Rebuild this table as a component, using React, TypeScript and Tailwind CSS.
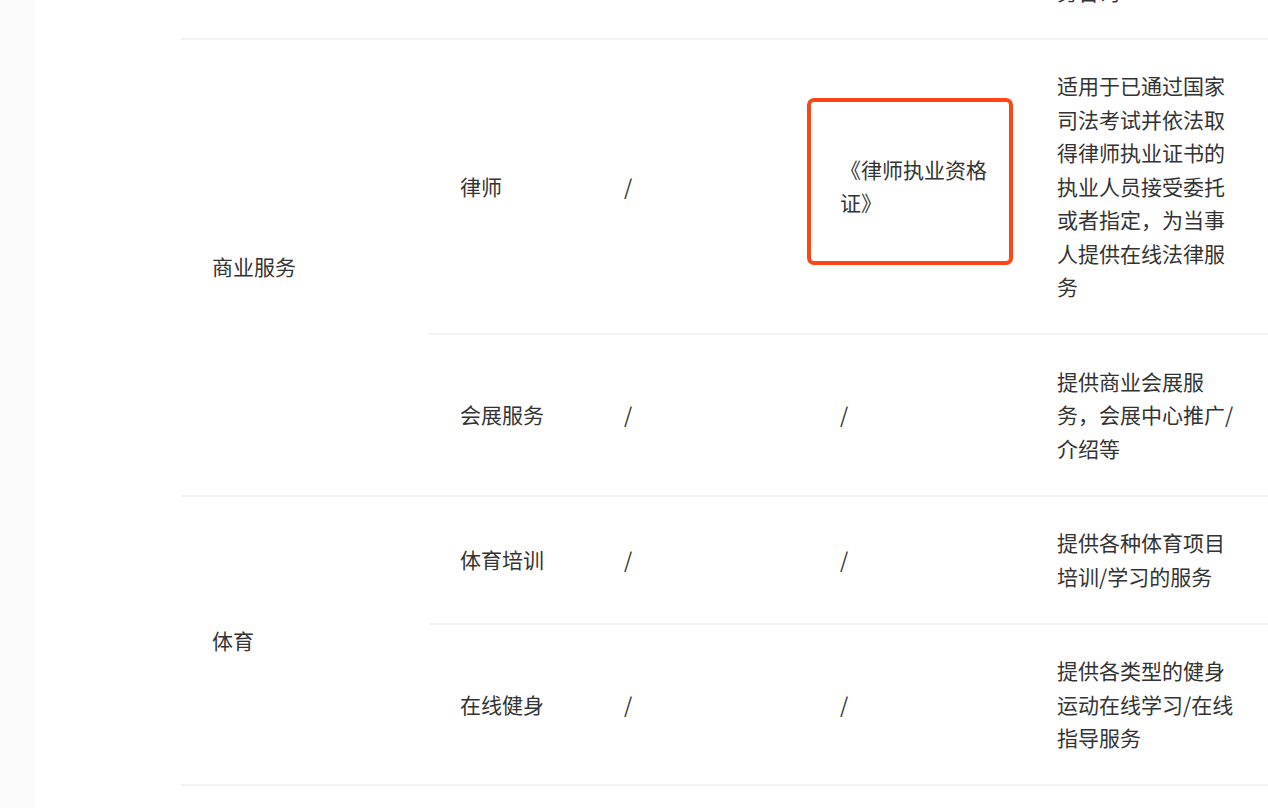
type Row = {
  group?: { label: string; span: number };
  name: string;
  license: string;
  cert: string;
  desc: string;
  marked?: boolean;
};

const ROWS: Row[] = [
  {
    group: { label: '法律', span: 1 },
    name: '法律咨询',
    license: '/',
    cert: '/',
    desc: '提供在线法律知识普及及法律文书服务咨询',
  },
  {
    group: { label: '商业服务', span: 2 },
    name: '律师',
    license: '/',
    cert: '《律师执业资格证》',
    desc: '适用于已通过国家司法考试并依法取得律师执业证书的执业人员接受委托或者指定，为当事人提供在线法律服务',
    marked: true,
  },
  { name: '会展服务', license: '/', cert: '/', desc: '提供商业会展服务，会展中心推广/介绍等' },
  { group: { label: '体育', span: 2 }, name: '体育培训', license: '/', cert: '/', desc: '提供各种体育项目培训/学习的服务' },
  { name: '在线健身', license: '/', cert: '/', desc: '提供各类型的健身运动在线学习/在线指导服务' },
];

const cell = 'px-[31px] py-[29.5px] align-middle text-left font-normal border-b-2 border-[#f3f3f3]';

export default function App() {
  return (
    <div
      className="flex h-screen bg-white text-[21px] leading-[33.5px] text-[#333]"
      style={{ fontFamily: '"Noto Sans CJK SC", "Noto Sans", sans-serif' }}
    >
      <aside className="w-[35px] shrink-0 bg-[#fafafa]" />
      <main className="flex-1 min-w-0 overflow-hidden pl-[146px]">
        <table className="table-fixed border-collapse w-[1087px] -mt-[122px]">
          <colgroup>
            <col className="w-[248px]" />
            <col className="w-[164px]" />
            <col className="w-[216px]" />
            <col className="w-[217px]" />
            <col className="w-[242px]" />
          </colgroup>
          <tbody>
            {ROWS.map((row) => (
              <tr key={row.name}>
                {row.group && (
                  <td rowSpan={row.group.span} className={cell}>
                    {row.group.label}
                  </td>
                )}
                <td className={cell}>{row.name}</td>
                <td className={cell}>{row.license}</td>
                <td className={`${cell} relative`}>
                  {row.cert}
                  {row.marked && (
                    <div className="absolute left-[-2px] top-[58px] w-[206px] h-[167px] rounded-[7px] border-4 border-[#ff4513]" />
                  )}
                </td>
                <td className={cell}>{row.desc}</td>
              </tr>
            ))}
          </tbody>
        </table>
      </main>
    </div>
  );
}
